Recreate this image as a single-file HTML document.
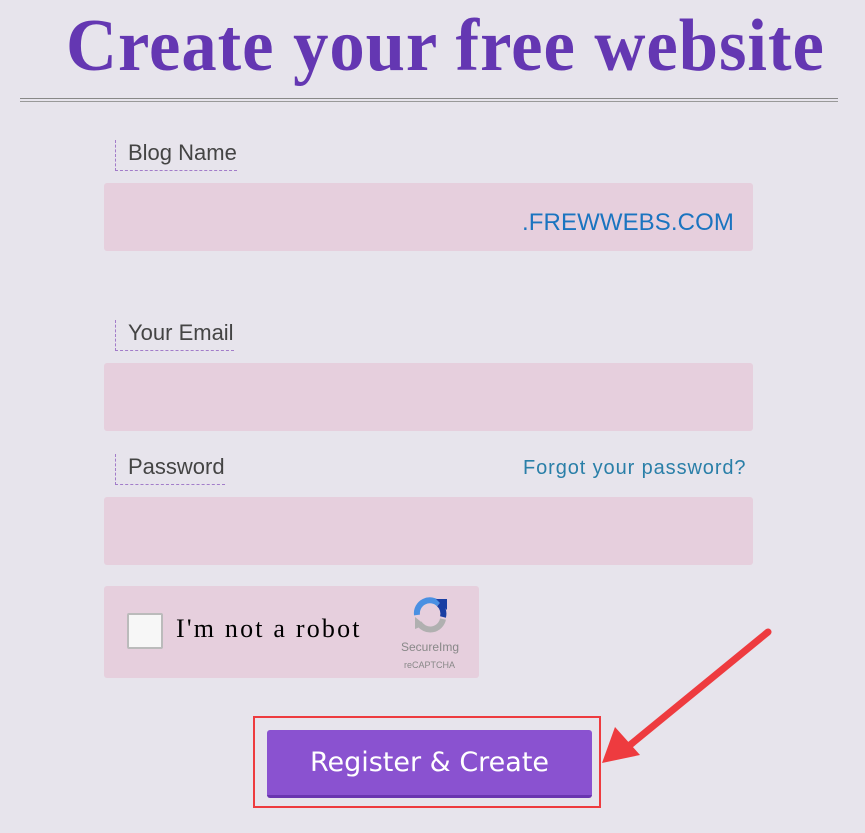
<!DOCTYPE html>
<html><head><style>
body{margin:0;width:865px;height:833px;background:#e7e4ec;position:relative;overflow:hidden;font-family:"Liberation Sans",sans-serif}
.a{position:absolute}
.title{left:66px;top:4px;font-family:"Liberation Serif",serif;font-weight:bold;font-size:74px;color:#6437b2;white-space:nowrap;transform:scaleX(0.955);transform-origin:left top;letter-spacing:1px}
.lbl{font-size:22px;color:#444;border-left:1px dashed #a27cc9;border-bottom:1px dashed #a27cc9;padding:0 0 4px 12px}
.inp{left:104px;width:649px;height:68px;background:#e6cfdd;border-radius:3px}
</style></head><body>
<div class="a title">Create your free website</div>
<div class="a" style="left:20px;top:98px;width:818px;height:1px;background:#888"></div>
<div class="a" style="left:20px;top:101px;width:818px;height:1px;background:#999"></div>
<div class="a lbl" style="left:115px;top:140px">Blog Name</div>
<div class="a inp" style="top:183px"></div>
<div class="a" style="left:522px;top:209px;font-size:24px;color:#1a74c0;letter-spacing:0.1px">.FREWWEBS.COM</div>
<div class="a lbl" style="left:115px;top:320px">Your Email</div>
<div class="a inp" style="top:363px"></div>
<div class="a lbl" style="left:115px;top:454px">Password</div>
<div class="a" style="left:523px;top:457px;font-size:20px;color:#2a7fa8;letter-spacing:0.9px">Forgot your password?</div>
<div class="a inp" style="top:497px"></div>
<div class="a" style="left:104px;top:586px;width:375px;height:92px;background:#e6cfdd;border-radius:3px"></div>
<div class="a" style="left:127px;top:613px;width:32px;height:32px;background:#f7f7f7;border:2px solid #bbb;border-radius:2px"></div>
<div class="a" style="left:176px;top:614px;font-family:'Liberation Serif',serif;font-size:26px;color:#000;letter-spacing:2.2px">I'm not a robot</div>
<svg class="a" style="left:409px;top:595px" width="42" height="42" viewBox="0 0 42 42"><path d="M8 20 A13 13 0 0 1 30 9" stroke="#4a90e2" stroke-width="6" fill="none"/><path d="M27 4 L38 4 L38 15Z" fill="#1a3fa3"/><path d="M30 9 A13 13 0 0 1 34 22" stroke="#1a3fa3" stroke-width="6" fill="none"/><path d="M34 24 A13 13 0 0 1 10 28" stroke="#b0b0b0" stroke-width="6" fill="none"/><path d="M6 22 L6 34 L16 30Z" fill="#b0b0b0"/></svg>
<div class="a" style="left:401px;top:640px;font-size:12px;color:#888">SecureImg</div>
<div class="a" style="left:404px;top:660px;font-size:9px;color:#888">reCAPTCHA</div>
<div class="a" style="left:253px;top:716px;width:348px;height:92px;border:2px solid #ee3b3f;box-sizing:border-box"></div>
<div class="a" style="left:267px;top:730px;width:325px;height:68px;background:#8a52d0;border-radius:3px;border-bottom:3px solid #6a35b0;box-sizing:border-box;color:#fff;font-family:'DejaVu Sans',sans-serif;font-size:27px;text-align:center;line-height:66px">Register &amp; Create</div>
<svg class="a" style="left:0;top:0" width="865" height="833"><line x1="768" y1="632" x2="630" y2="745" stroke="#ee3b3f" stroke-width="7" stroke-linecap="round"/><path d="M602 763 L615 727 L640 755Z" fill="#ee3b3f"/></svg>
</body></html>
